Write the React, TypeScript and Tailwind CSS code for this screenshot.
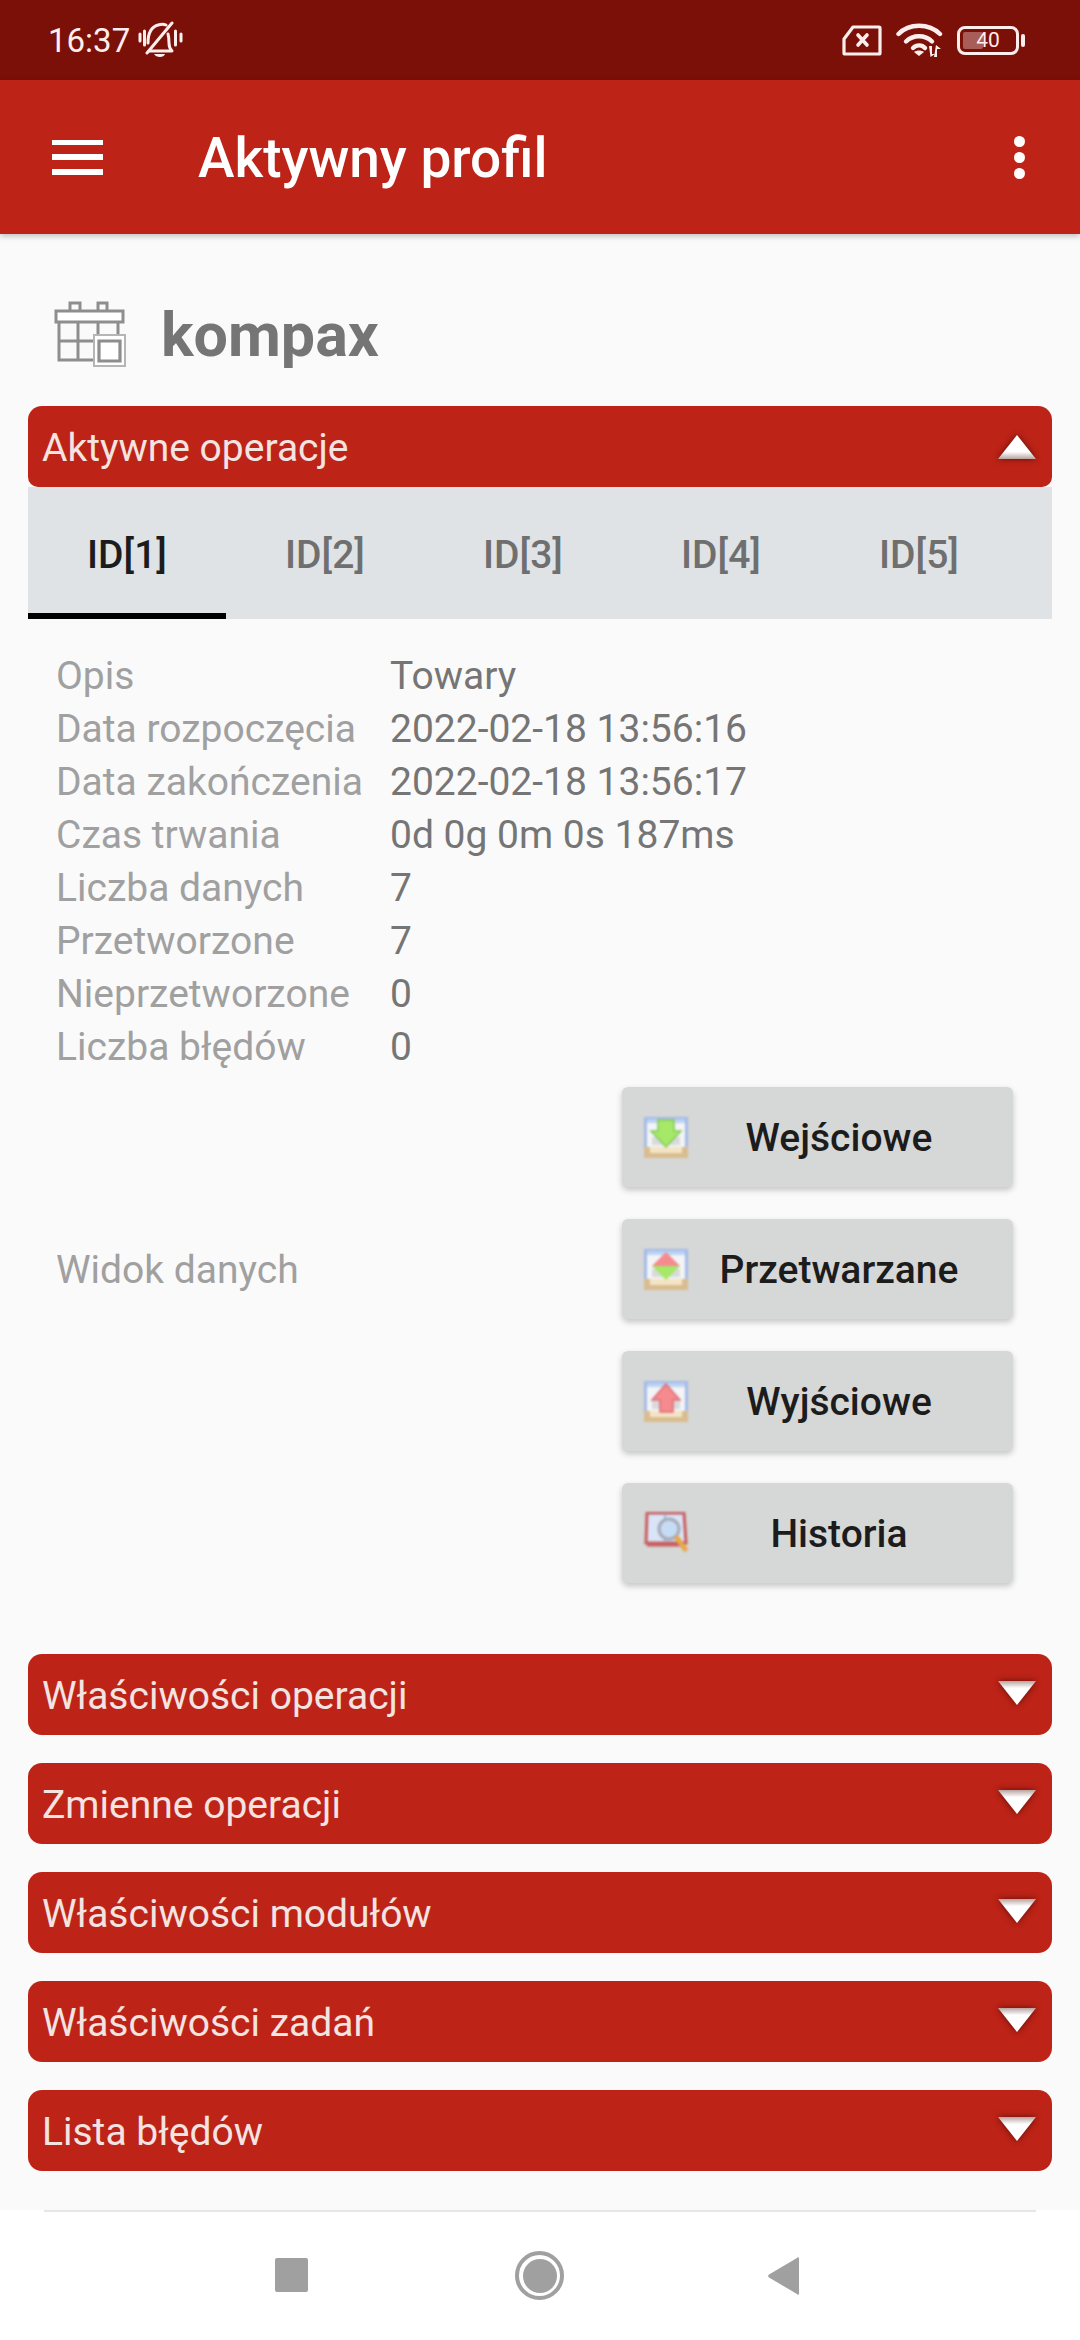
import React from "react";

const RED = "bg-[#bd2317]";

function BellOff() {
  return (
    <svg width="46" height="38" viewBox="0 0 46 38" fill="none" stroke="#fdeeee" strokeWidth="3" strokeLinecap="round" strokeLinejoin="round">
      <path d="M2 13v7M6.500 10v14M37.500 10v14M43 13v7" />
      <path d="M10 22c0-9 3-16 10-18 3-1 6-1 8 0" />
      <path d="M30 13c1 3 1 6 1 9 0 4 1 6 3 8H11" />
      <path d="M9 32L34 2" />
      <path d="M16 33h11c-1 4-9 4-11 0z" fill="#fdeeee" stroke="none" />
    </svg>
  );
}

function SimOff() {
  return (
    <svg width="40" height="31" viewBox="0 0 40 31" fill="none">
      <path d="M11 2h26a1 1 0 0 1 1 1v25a1 1 0 0 1-1 1H3a1 1 0 0 1-1-1V14z" stroke="#fdeeee" strokeWidth="3.200" strokeLinejoin="round" />
      <path d="M16 10l9 10M25 10l-9 10" stroke="#fdeeee" strokeWidth="3.600" strokeLinecap="round" />
    </svg>
  );
}

function WifiIcon() {
  return (
    <svg width="48" height="34" viewBox="0 0 48 34" fill="none" stroke="#fdeeee" strokeLinecap="round">
      <path d="M2.500 11C13 0 33 0 44 11" strokeWidth="4.400" />
      <path d="M10 18.500c7-7 19-7 26 0" strokeWidth="4.400" />
      <path d="M17 25c3.500-3.500 9-3.500 12 0" strokeWidth="4.400" />
      <path d="M23 33l-5-4c3-2 7-2 10 0z" fill="#fdeeee" stroke="none" />
      <path d="M34 23h3v8h3l-4.500 3zM39 34h3v-8h4l-5-4z" fill="#fdeeee" stroke="none" transform="translate(-1 0)" />
    </svg>
  );
}

function Battery() {
  return (
    <div className="flex items-center gap-[2px]">
      <div className="relative flex h-[29px] w-[62px] items-center rounded-[8px] border-[3px] border-[#fdeeee] p-[3px]">
        <div className="h-full w-[40%] rounded-[2px] bg-[#fdeeee]/35" />
        <span className="absolute inset-0 flex items-center justify-center text-[21px] leading-none text-[#fdeeee]">40</span>
      </div>
      <div className="h-[13px] w-[4px] rounded-full bg-[#fdeeee]" />
    </div>
  );
}

function CalendarIcon() {
  return (
    <svg width="72" height="68" viewBox="0 0 72 68" fill="none" stroke="#8e8e8e" strokeWidth="3" className="blur-[0.4px]">
      <path d="M16 10V2h10v8M44 10V2h9v8" />
      <path d="M2 10h67v11H2z" fill="#ffffff" />
      <path d="M5 21v38h38M5 40h36M24 21v38M44 21v17M64 21v13" />
      <path d="M40 34h31v31H40z" fill="#ffffff" strokeWidth="2" stroke="#b5b5b5" />
      <path d="M45 40h21v20H45z" strokeWidth="3.200" />
    </svg>
  );
}

// Small tray icon shared by the input, processing and output buttons
function Tray({ children }: { children: React.ReactNode }) {
  return (
    <svg width="44" height="41" viewBox="0 0 44 41" className="shrink-0 blur-[0.8px]">
      <rect width="44" height="41" fill="#a4bbe6" />
      <rect x="3" y="6" width="38" height="26" fill="#f2f4f6" />
      <rect x="3" y="2" width="38" height="4" fill="#bcd3f5" />
      <rect x="8" y="20" width="28" height="8" fill="#d8dadc" />
      <rect y="30" width="44" height="11" fill="#d9bd90" />
      <rect x="6" y="30" width="32" height="6" fill="#f3e4c6" />
      {children}
    </svg>
  );
}

const ArrowDown = () => (
  <Tray>
    <path d="M14 3h16v11h7L22 30 7 14h7z" fill="#a6e868" stroke="#86c95a" strokeWidth="1.500" />
  </Tray>
);

const Diamond = () => (
  <Tray>
    <path d="M22 3L36 17H8z" fill="#f58a8f" />
    <path d="M8 17h28L22 31z" fill="#a6e868" />
  </Tray>
);

const ArrowUp = () => (
  <Tray>
    <path d="M22 3L36 19h-7v12H16V19H8z" fill="#f58a8f" stroke="#dc6f72" strokeWidth="1.500" />
  </Tray>
);

const BookSearch = () => (
  <svg width="44" height="42" viewBox="0 0 44 42" className="shrink-0 blur-[0.8px]">
    <path d="M3 1h37l2 30H2z" fill="#d9e4f7" stroke="#c75e5e" strokeWidth="3" />
    <path d="M3 33h38" stroke="#c75e5e" strokeWidth="3" />
    <path d="M21 2v28" stroke="#9fb5dc" strokeWidth="2" />
    <circle cx="25" cy="17" r="10" fill="#c6dcf4" stroke="#a6aab8" strokeWidth="3" />
    <path d="M33 26l8 11" stroke="#e8a848" strokeWidth="5" strokeLinecap="round" />
  </svg>
);

function Chevron({ up }: { up?: boolean }) {
  const id = up ? "chev-up" : "chev-down";
  return (
    <svg
      width="52"
      height="37"
      viewBox="0 0 52 37"
      className={`absolute right-[9px] drop-shadow-[0_0_3px_#5c0d07] ${up ? "top-[22px] rotate-180" : "top-[21px]"}`}
    >
      <defs>
        <linearGradient id={id} x1="0" x2="0" y1="0" y2="1">
          <stop offset="0" stopColor="#b8a4a0" />
          <stop offset="0.3" stopColor="#ffffff" />
          <stop offset="1" stopColor="#ffffff" />
        </linearGradient>
      </defs>
      <path d="M7 6h38L26 30z" fill={`url(#${id})`} />
    </svg>
  );
}

function Section({ title, open }: { title: string; open?: boolean }) {
  return (
    <div className={`relative flex h-[81px] items-center px-[14px] pt-[3px] ${RED} ${open ? "rounded-t-[14px] rounded-b-[10px]" : "rounded-[14px]"}`}>
      <span className="text-[39px] text-[#f3e3e1]">{title}</span>
      <Chevron up={open} />
    </div>
  );
}

const details: [string, string][] = [
  ["Opis", "Towary"],
  ["Data rozpoczęcia", "2022-02-18 13:56:16"],
  ["Data zakończenia", "2022-02-18 13:56:17"],
  ["Czas trwania", "0d 0g 0m 0s 187ms"],
  ["Liczba danych", "7"],
  ["Przetworzone", "7"],
  ["Nieprzetworzone", "0"],
  ["Liczba błędów", "0"],
];

const actions: { label: string; icon: React.ReactNode }[] = [
  { label: "Wejściowe", icon: <ArrowDown /> },
  { label: "Przetwarzane", icon: <Diamond /> },
  { label: "Wyjściowe", icon: <ArrowUp /> },
  { label: "Historia", icon: <BookSearch /> },
];

const tabs = ["ID[1]", "ID[2]", "ID[3]", "ID[4]", "ID[5]"];
const sections = ["Właściwości operacji", "Zmienne operacji", "Właściwości modułów", "Właściwości zadań", "Lista błędów"];

export default function App() {
  return (
    <div className="flex h-[2340px] w-[1080px] flex-col overflow-hidden bg-[#fafafa] font-['Roboto',sans-serif]">
      {/* Status bar */}
      <div className="flex h-[80px] shrink-0 items-center bg-[#7b1008] pl-[48px] pr-[55px] text-[#fdeeee]">
        <span className="text-[33px] leading-none">16:37</span>
        <span className="ml-[8px]"><BellOff /></span>
        <span className="ml-auto"><SimOff /></span>
        <span className="ml-[14px]"><WifiIcon /></span>
        <span className="ml-[13px]"><Battery /></span>
      </div>

      {/* App bar */}
      <div className={`z-10 flex h-[154px] shrink-0 items-center pl-[52px] pr-[55px] shadow-[0_2px_6px_rgba(0,0,0,0.25)] ${RED}`}>
        <div className="flex w-[51px] flex-col gap-[9px]">
          <div className="h-[5px] bg-white" />
          <div className="h-[6px] bg-white" />
          <div className="h-[6px] bg-white" />
        </div>
        <h1 className="ml-[95px] pt-[3px] text-[55px] font-medium text-white">Aktywny profil</h1>
        <div className="ml-auto flex flex-col gap-[5px]">
          <div className="size-[11px] rounded-full bg-white" />
          <div className="size-[11px] rounded-full bg-white" />
          <div className="size-[11px] rounded-full bg-white" />
        </div>
      </div>

      {/* Scrolling content */}
      <div className="flex-1 px-[28px]">
        <div className="ml-[26px] mt-[68px] flex h-[66px] items-center gap-[35px]">
          <CalendarIcon />
          <span className="text-[61px] font-bold leading-none text-[#757575]">kompax</span>
        </div>

        <div className="mt-[38px]">
          <Section title="Aktywne operacje" open />
          <div className="flex h-[132px] bg-[#dfe3e6]">
            {tabs.map((t, i) => (
              <div
                key={t}
                className={`flex h-full w-[198px] items-center justify-center border-b-[6px] pt-[10px] text-[39px] font-medium ${i === 0 ? "border-black text-[#1c1c1c]" : "border-transparent text-[#6f6f6f]"}`}
              >
                {t}
              </div>
            ))}
          </div>

          <div className="ml-[28px] mt-[31px]">
            {details.map(([k, v]) => (
              <div key={k} className="flex h-[53px] items-center text-[39px]">
                <span className="w-[334px] text-[#a0a0a0]">{k}</span>
                <span className="text-[#757575]">{v}</span>
              </div>
            ))}
          </div>

          <div className="mt-[13px] grid grid-cols-[566px_391px] gap-y-[32px] pl-[28px]">
            <span className="col-start-1 row-start-2 self-center pt-[3px] text-[39px] text-[#a0a0a0]">Widok danych</span>
            {actions.map((a, i) => (
              <div
                key={a.label}
                className={`col-start-2 flex h-[100px] items-center rounded-[6px] bg-[#d6d7d7] pl-[22px] pr-[23px] shadow-[0_3px_6px_rgba(0,0,0,0.22)] ${["row-start-1", "row-start-2", "row-start-3", "row-start-4"][i]}`}
              >
                {a.icon}
                <span className="flex-1 pt-[3px] text-center text-[39px] font-medium text-[#1c1c1c]">{a.label}</span>
              </div>
            ))}
          </div>
        </div>

        <div className="mt-[71px] flex flex-col gap-[28px]">
          {sections.map((s) => (
            <Section key={s} title={s} />
          ))}
        </div>
      </div>

      {/* Navigation bar */}
      <div className="flex h-[130px] shrink-0 flex-col bg-white">
        <div className="mx-[44px] h-[2px] bg-[#e6e6e6]" />
        <div className="relative flex-1">
          <div className="absolute left-[275px] top-[46px] h-[34px] w-[33px] rounded-[2px] bg-[#a0a0a0]" />
          <div className="absolute left-[515px] top-[39px] flex size-[49px] items-center justify-center rounded-full border-[4px] border-[#a0a0a0]">
            <div className="size-[34px] rounded-full bg-[#a0a0a0]" />
          </div>
          <svg className="absolute left-[767px] top-[44px]" width="34" height="40" viewBox="0 0 34 40">
            <path d="M32 3v34a1 1 0 0 1-2 1L2 21.500a2 2 0 0 1 0-3L30 2a1 1 0 0 1 2 1z" fill="#a0a0a0" />
          </svg>
        </div>
      </div>
    </div>
  );
}
